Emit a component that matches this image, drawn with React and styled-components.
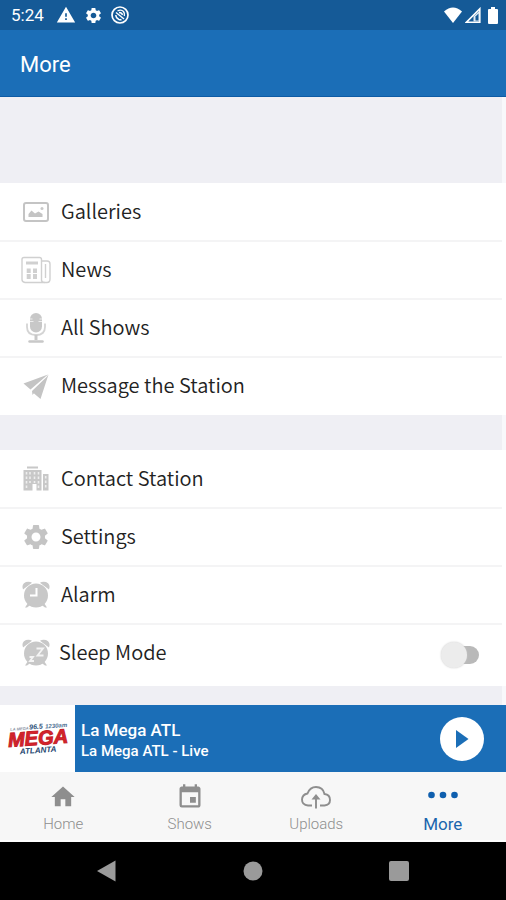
import React, { useState } from 'react'
import styled, { createGlobalStyle } from 'styled-components'
import { MdHome, MdSettings, MdWarning, MdEvent } from 'react-icons/md'

const GlobalStyle = createGlobalStyle`
    * {
        box-sizing: border-box;
    }
    body {
        margin: 0;
        background: #000;
        font-family: Roboto, sans-serif;
    }
`;

const GalleryIcon = () => (
    <svg width="30" height="30" viewBox="0 0 30 30" fill="none" aria-hidden="true">
        <rect x="3" y="6" width="24" height="18" rx="2" stroke="#c4c4c4" strokeWidth="2"/>
        <path d="M7.500 20v-3l3-3.500 3.500 3 3.500-2 4 2.500v3z" fill="#c4c4c4"/>
        <circle cx="21" cy="11.500" r="1.500" fill="#c9c9c9"/>
    </svg>
);

const NewsIcon = () => (
    <svg width="30" height="30" viewBox="0 0 30 30" fill="none" stroke="#d0d0d0" aria-hidden="true">
        <path d="M20.500 4.500V25q0 2 3 2.500H4q-3-.5-3-3V4.500q0-2 2-2h15.500q2 0 2 2z" strokeWidth="1.400"/>
        <path d="M21 6h5q3 0 3 3v15q0 3.500-3 3.500h-3M24.500 9v14" strokeWidth="1.400"/>
        <path d="M5 8h12" strokeWidth="3"/>
        <path d="M7.700 13.500v4.500M14 13.500v4.500M7.700 19v5M14 19v5" strokeWidth="4"/>
    </svg>
);

const MicIcon = () => (
    <svg width="30" height="30" viewBox="0 0 30 30" fill="none" aria-hidden="true">
        <rect x="9" y="0" width="12" height="19.500" rx="6" fill="#c8c8c8"/>
        <path d="M9 8.500h3.500M17.500 8.500H21M9 6h2.500M18.500 6H21" stroke="#eee" strokeWidth="1"/>
        <path d="M6 10.500v3.500q0 8 9 8t9-8v-3.500" stroke="#d4d4d4" strokeWidth="1.800"/>
        <path d="M15 22v5" stroke="#c8c8c8" strokeWidth="3"/>
        <path d="M8.500 28.500h13" stroke="#c8c8c8" strokeWidth="2.500" strokeLinecap="round"/>
    </svg>
);

const PlaneIcon = () => (
    <svg width="30" height="30" viewBox="0 0 30 30" fill="#c4c4c4" aria-hidden="true">
        <path d="M2.500 12.500L27 3.500 9.500 18.500zM27.500 3.500L19.500 28l-7-6zM11 20L25 6.500 11.500 24z"/>
    </svg>
);

const BuildingIcon = () => (
    <svg width="30" height="30" viewBox="0 0 30 30" fill="#c8c8c8" aria-hidden="true">
        <path d="M6 2.500h11v2H6zM2.500 6h18v20.500h-5V20h-4v6.500h-9zM22 10h5.500v16.500H22z"/>
        <path d="M5.500 8v17M9 8v11M13.500 8v11M17.500 8v17M24.700 12v13" stroke="#eee" strokeWidth="1.600" strokeDasharray="2.500 2" fill="none"/>
    </svg>
);

const ClockBody = () => (
    <>
        <path d="M2 9.500Q0 4 5 2q3.500-1 6 .8zM28 9.500Q30 4 25 2q-3.500-1-6 .8z"/>
        <circle cx="15" cy="15.500" r="12"/>
        <path d="M7 23l-3 4.500h2l4-3zM23 23l3 4.500h-2l-4-3z"/>
    </>
);

const AlarmIcon = () => (
    <svg width="30" height="30" viewBox="0 0 30 30" fill="#c8c8c8" aria-hidden="true">
        <ClockBody/>
        <path d="M15.500 8v7.500H9" fill="none" stroke="#fff" strokeWidth="2"/>
    </svg>
);

const SleepIcon = () => (
    <svg width="30" height="30" viewBox="0 0 30 30" fill="#c8c8c8" aria-hidden="true">
        <ClockBody/>
        <path d="M15.500 10.500h6.500l-5.500 7h6M8.500 19h3.500l-3 4h4" fill="none" stroke="#f4f4f4" strokeWidth="1.800"/>
    </svg>
);

const SyncOffIcon = () => (
    <svg width="18" height="18" viewBox="0 0 18 18" fill="none" stroke="#fff" aria-hidden="true">
        <circle cx="9" cy="9" r="8" strokeWidth="1.700"/>
        <path d="M5 6.500l8 6.500M6.500 5q3.500-2 6 .5 1.500 2 .8 4.500M4.800 9q.2 3.500 3.200 4.500 1.500.4 2.500 0M8 6.500q3 0 3.500 2.500" strokeWidth="1.400"/>
    </svg>
);

const WifiIcon = () => (
    <svg width="18" height="16" viewBox="0 0 18 16" fill="#fff" aria-hidden="true">
        <path d="M9 16L0 4.500q9-8 18 0z"/>
    </svg>
);

const SignalIcon = () => (
    <svg width="16" height="16" viewBox="0 0 16 16" fill="none" aria-hidden="true">
        <path d="M14.800 1.800v13.400H1.500z" stroke="#fff" strokeWidth="1.600"/>
        <path d="M8.500 14.500V9.500l6-6v11z" fill="#dfe9f3"/>
        <path d="M10.500 13.500v-4l3-3v7z" fill="#155a97"/>
    </svg>
);

const BatteryIcon = () => (
    <svg width="10" height="17" viewBox="0 0 10 17" fill="#fff" aria-hidden="true">
        <path d="M3 0h4v2h2q1 0 1 1v13q0 1-1 1H1q-1 0-1-1V3q0-1 1-1h2z"/>
    </svg>
);

const PlayIcon = () => (
    <svg width="14" height="18" viewBox="0 0 14 18" fill="currentColor" aria-hidden="true">
        <path d="M1 0l12.500 9L1 18z"/>
    </svg>
);

const CloudIcon = () => (
    <svg width="30" height="24" viewBox="0 0 30 24" fill="none" stroke="#8e8e8e" strokeWidth="1.900" aria-hidden="true">
        <path d="M11 20.500H7q-6-.5-6-6 .3-5 5.500-6Q9 2 15 2q7 0 8.500 7 5.500.5 5.500 6 0 5-5.500 5.500H19"/>
        <path d="M15 23.500V12"/>
        <path d="M15 9l4.500 5.500h-9z" fill="#8e8e8e" stroke="none"/>
    </svg>
);

const DotsIcon = () => (
    <svg width="30" height="24" viewBox="0 0 30 24" fill="#0f5fae" aria-hidden="true">
        <circle cx="3.500" cy="10" r="3.300"/>
        <circle cx="15" cy="10" r="3.300"/>
        <circle cx="26.500" cy="10" r="3.300"/>
    </svg>
);

const StationLogo = () => (
    <svg width="75" height="50" viewBox="0 0 75 50" role="img" aria-label="Mega Atlanta" fontFamily="Liberation Sans, sans-serif" fontWeight="bold" fontStyle="italic">
        <g transform="rotate(-4 37 25)">
            <text x="11" y="15" fontSize="4" fill="#8a93a5">LA MEGA</text>
            <text x="30" y="15" fontSize="7" fill="#2b5078">96.5</text>
            <text x="46" y="15" fontSize="6" fill="#4b7093">1230am</text>
            <text x="8" y="31" fontSize="20" fill="#d8232a" stroke="#c41f2a" strokeWidth="1">MEGA</text>
            <text x="19" y="39" fontSize="8" fill="#24466f">ATLANTA</text>
        </g>
    </svg>
);

const stationLinks = [
    { label: "Galleries", icon: <GalleryIcon/> },
    { label: "News", icon: <NewsIcon/> },
    { label: "All Shows", icon: <MicIcon/> },
    { label: "Message the Station", icon: <PlaneIcon/> },
];

const appLinks = [
    { label: "Contact Station", icon: <BuildingIcon/> },
    { label: "Settings", icon: <MdSettings size={30} color="#c4c4c4"/> },
    { label: "Alarm", icon: <AlarmIcon/> },
];

const tabs = [
    { label: "Home", icon: <MdHome size={28}/> },
    { label: "Shows", icon: <MdEvent size={28}/> },
    { label: "Uploads", icon: <CloudIcon/> },
    { label: "More", icon: <DotsIcon/>, active: true },
];

const MenuLinks = ({ items }) => items.map(({ label, icon }) => (
    <li key={label}>
        <MenuLink href="#">
            {icon}
            <span>{label}</span>
        </MenuLink>
    </li>
));

export default function App() {
    const [sleep, setSleep] = useState(false);

    return (
        <Screen>
            <GlobalStyle/>
            <StatusBar>
                <time>5:24</time>
                <MdWarning size={20}/>
                <MdSettings size={19}/>
                <SyncOffIcon/>
                <Signals>
                    <WifiIcon/>
                    <SignalIcon/>
                    <BatteryIcon/>
                </Signals>
            </StatusBar>
            <Header>
                <h1>More</h1>
            </Header>
            <Content>
                <Gap $height={86}/>
                <Menu>
                    <MenuLinks items={stationLinks}/>
                </Menu>
                <Gap $height={35}/>
                <Menu>
                    <MenuLinks items={appLinks}/>
                    <li>
                        <SwitchRow>
                            <SleepIcon/>
                            <span>Sleep Mode</span>
                            <Switch type="checkbox" role="switch" checked={sleep} onChange={() => setSleep(!sleep)}/>
                        </SwitchRow>
                    </li>
                </Menu>
                <Gap $height={19}/>
            </Content>
            <Player>
                <Cover>
                    <StationLogo/>
                </Cover>
                <Track>
                    <strong>La Mega ATL</strong>
                    <span>La Mega ATL - Live</span>
                </Track>
                <PlayButton aria-label="Play">
                    <PlayIcon/>
                </PlayButton>
            </Player>
            <TabBar>
                {tabs.map(({ label, icon, active }) => (
                    <Tab key={label} href="#" $active={active}>
                        {icon}
                        <span>{label}</span>
                    </Tab>
                ))}
            </TabBar>
            <SystemBar>
                <button aria-label="Back">
                    <svg width="20" height="22" viewBox="0 0 20 22" fill="#9a9a9a"><path d="M0 11L18.500 .5v21z"/></svg>
                </button>
                <button aria-label="Home screen">
                    <svg width="20" height="22" viewBox="0 0 20 22" fill="#9a9a9a"><circle cx="10" cy="11" r="9.500"/></svg>
                </button>
                <button aria-label="Recent apps">
                    <svg width="20" height="22" viewBox="0 0 20 22" fill="#9a9a9a"><rect x="0" y="1" width="20" height="20" rx="2"/></svg>
                </button>
            </SystemBar>
        </Screen>
    )
}

const Screen = styled.div`
    display: flex;
    flex-direction: column;
    min-height: 100vh;
    background: #fff;
`;

const StatusBar = styled.div`
    display: flex;
    align-items: center;
    gap: 8px;
    height: 30px;
    padding: 0 8px 0 11px;
    background: #155a97;
    color: #fff;
    time {
        margin-right: 4px;
        font-size: 17px;
        line-height: 20px;
    }
`;

const Signals = styled.div`
    display: flex;
    align-items: center;
    gap: 3px;
    margin-left: auto;
    svg:last-child {
        margin-left: 4px;
    }
`;

const Header = styled.header`
    display: flex;
    align-items: center;
    height: 67px;
    padding: 4px 20px 0;
    background: #1b6eb7;
    border-bottom: 1px solid #0d5ba5;
    color: #fff;
    h1 {
        margin: 0;
        font-size: 22px;
        font-weight: 400;
        line-height: 28px;
    }
`;

const Content = styled.main`
    flex: 1;
`;

const Gap = styled.div`
    height: ${({ $height }) => $height}px;
    background: #efeff4;
    border-right: 4px solid #f8f8fb;
`;

const Menu = styled.ul`
    margin: 0;
    padding: 0 4px 0 0;
    list-style: none;
    li + li {
        border-top: 2px solid #f4f4f5;
    }
    li:first-child {
        padding-top: 1px;
    }
    li:last-child {
        padding-bottom: 1px;
    }
`;

const MenuLink = styled.a`
    display: flex;
    align-items: center;
    gap: 10px;
    height: 56px;
    padding: 0 21px;
    color: #222;
    text-decoration: none;
    font-family: "Noto Sans CJK SC", sans-serif;
    font-size: 20px;
    font-weight: 350;
    line-height: 28px;
    span {
        padding-bottom: 2px;
    }
`;

const SwitchRow = styled(MenuLink).attrs({ as: 'label' })`
    gap: 8px;
    height: 60px;
    padding-bottom: 4px;
`;

const Switch = styled.input`
    appearance: none;
    display: flex;
    align-items: center;
    width: 38px;
    height: 18px;
    margin: 4px 2px 0 auto;
    border-radius: 9px;
    background: linear-gradient(to right, transparent 12px, #b9b9b9 12px);
    &::before {
        content: "";
        width: 26px;
        height: 26px;
        flex: none;
        border-radius: 50%;
        background: #ececec;
        box-shadow: 0 0 2px #ccc;
    }
    &:checked {
        justify-content: flex-end;
        background: #8db7db;
    }
`;

const Player = styled.section`
    display: flex;
    align-items: center;
    height: 67px;
    padding-right: 22px;
    background: #1b6eb7;
    color: #fff;
`;

const Cover = styled.div`
    display: flex;
    align-items: center;
    justify-content: center;
    align-self: stretch;
    width: 75px;
    background: #fff;
`;

const Track = styled.div`
    display: flex;
    flex-direction: column;
    flex: 1;
    padding: 2px 0 0 6px;
    strong {
        font-size: 17px;
        font-weight: 500;
        line-height: 22px;
    }
    span {
        font-size: 15px;
        font-weight: 500;
        line-height: 20px;
    }
`;

const PlayButton = styled.button`
    display: flex;
    align-items: center;
    justify-content: center;
    width: 44px;
    height: 44px;
    padding: 0;
    border: none;
    border-radius: 50%;
    background: #fff;
    color: #1b6eb7;
`;

const TabBar = styled.nav`
    display: flex;
    height: 70px;
    background: #f7f7f7;
    border-bottom: 2px solid #fff;
`;

const Tab = styled.a`
    display: flex;
    flex-direction: column;
    align-items: center;
    flex: 1;
    padding-top: 11px;
    color: ${({ $active }) => $active ? "#1b65ad" : "#8e8e8e"};
    text-decoration: none;
    svg {
        height: 28px;
    }
    span {
        font-size: ${({ $active }) => $active ? 17 : 15}px;
        font-weight: ${({ $active }) => $active ? 400 : 300};
        line-height: 26px;
    }
`;

const SystemBar = styled.div`
    display: flex;
    align-items: center;
    justify-content: space-between;
    height: 58px;
    padding: 0 97px;
    background: #000;
    button {
        display: flex;
        padding: 0;
        border: none;
        background: none;
    }
`;
